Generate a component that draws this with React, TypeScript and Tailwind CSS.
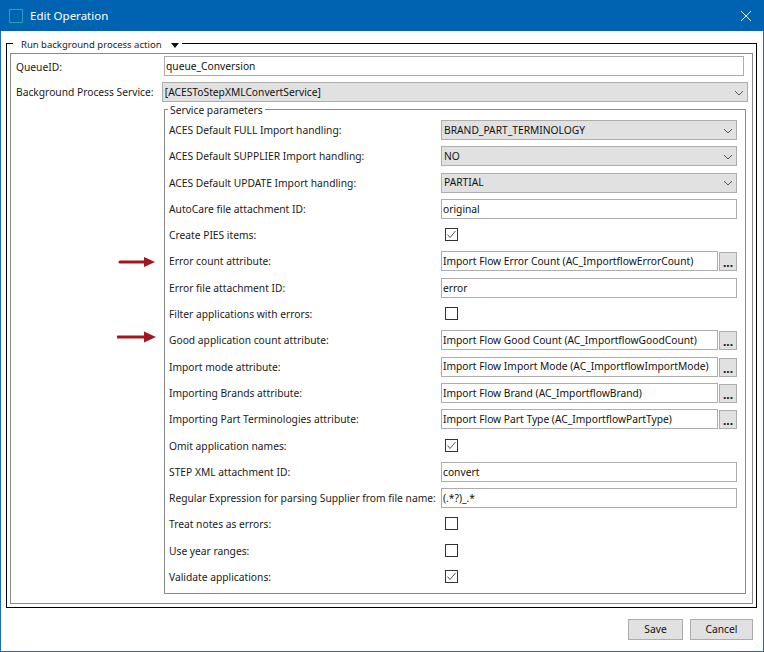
const FONT = "font-['DejaVu_Sans_Condensed','Liberation_Sans',sans-serif]"

type Row =
  | { label: string; kind: 'select' | 'text'; value: string }
  | { label: string; kind: 'attr'; value: string; arrow?: 'short' | 'long' }
  | { label: string; kind: 'check'; checked: boolean }

const rows: Row[] = [
  { label: 'ACES Default FULL Import handling:', kind: 'select', value: 'BRAND_PART_TERMINOLOGY' },
  { label: 'ACES Default SUPPLIER Import handling:', kind: 'select', value: 'NO' },
  { label: 'ACES Default UPDATE Import handling:', kind: 'select', value: 'PARTIAL' },
  { label: 'AutoCare file attachment ID:', kind: 'text', value: 'original' },
  { label: 'Create PIES items:', kind: 'check', checked: true },
  { label: 'Error count attribute:', kind: 'attr', value: 'Import Flow Error Count (AC_ImportflowErrorCount)', arrow: 'short' },
  { label: 'Error file attachment ID:', kind: 'text', value: 'error' },
  { label: 'Filter applications with errors:', kind: 'check', checked: false },
  { label: 'Good application count attribute:', kind: 'attr', value: 'Import Flow Good Count (AC_ImportflowGoodCount)', arrow: 'long' },
  { label: 'Import mode attribute:', kind: 'attr', value: 'Import Flow Import Mode (AC_ImportflowImportMode)' },
  { label: 'Importing Brands attribute:', kind: 'attr', value: 'Import Flow Brand (AC_ImportflowBrand)' },
  { label: 'Importing Part Terminologies attribute:', kind: 'attr', value: 'Import Flow Part Type (AC_ImportflowPartType)' },
  { label: 'Omit application names:', kind: 'check', checked: true },
  { label: 'STEP XML attachment ID:', kind: 'text', value: 'convert' },
  { label: 'Regular Expression for parsing Supplier from file name:', kind: 'text', value: '(.*?)_.*' },
  { label: 'Treat notes as errors:', kind: 'check', checked: false },
  { label: 'Use year ranges:', kind: 'check', checked: false },
  { label: 'Validate applications:', kind: 'check', checked: true },
]

function Arrow({ long }: { long?: boolean }) {
  return (
    <svg
      width="40"
      height="14"
      viewBox="0 0 40 14"
      className={`absolute left-[-52px] ${long ? 'top-[0px]' : 'top-[4px]'}`}
    >
      <path
        d={long ? 'M1 7H29' : 'M3 7H29'}
        stroke="#a31621"
        strokeWidth="3"
        strokeLinecap="round"
      />
      <path d={long ? 'M27 1.5L39 7L27 12.5Z' : 'M27 2L38 7L27 12Z'} fill="#a31621" />
    </svg>
  )
}

function Select({ value, className }: { value: string; className: string }) {
  return (
    <div className={`flex h-5 items-center justify-between border border-[#adadad] bg-[#e1e1e1] pl-[2px] pr-[3px] pt-[1px] ${className}`}>
      <span className="whitespace-nowrap text-[#111]">{value}</span>
      <svg width="10" height="6" viewBox="0 0 10 6" className="shrink-0">
        <path d="M1 1L5 5L9 1" fill="none" stroke="#555" strokeWidth="1" />
      </svg>
    </div>
  )
}

function Input({ value, className }: { value: string; className: string }) {
  return (
    <div className={`flex h-5 items-center whitespace-nowrap border border-[#adadad] bg-white pl-[1px] pt-[1px] text-[#111] ${className}`}>
      {value}
    </div>
  )
}

function Check({ checked }: { checked: boolean }) {
  return (
    <div className="ml-[4px] flex h-[13px] w-[13px] items-center justify-center border border-[#333] bg-white">
      {checked && (
        <svg width="11" height="11" viewBox="0 0 11 11">
          <path d="M1.5 5.5L4 8.5L9.5 2" fill="none" stroke="#555" strokeWidth="1" />
        </svg>
      )}
    </div>
  )
}

function Control({ row }: { row: Row }) {
  if (row.kind === 'select') return <Select value={row.value} className="w-[296px]" />
  if (row.kind === 'text') return <Input value={row.value} className="w-[296px]" />
  if (row.kind === 'check') return <Check checked={row.checked} />
  return (
    <div className="flex w-[296px] gap-[1px]">
      <Input value={row.value} className="w-[277px]" />
      <div className="mt-[1px] flex h-[19px] w-[18px] items-end justify-center border border-[#adadad] bg-[#e1e1e1] pb-[3px] text-[12px] leading-[8px] font-bold text-[#111]">
        ...
      </div>
    </div>
  )
}

export default function App() {
  return (
    <div className={`flex h-[652px] w-[764px] flex-col border border-t-0 border-[#1b6cb3] bg-white text-[10.25px] text-[#1a1a1a] ${FONT}`}>
      {/* Title bar */}
      <div className="mx-[-1px] flex h-[31px] shrink-0 items-center bg-[#0063b1] pl-[9px] pr-[12px] text-white">
        <div className="h-[14px] w-[14px] border border-[#18a5b5]" />
        <span className="ml-[7px] text-[11.5px]">Edit Operation</span>
        <svg width="12" height="12" viewBox="0 0 12 12" className="ml-auto">
          <path d="M1 1L11 11M11 1L1 11" stroke="white" strokeWidth="1" />
        </svg>
      </div>

      {/* Body */}
      <div className="relative ml-[5px] mr-[6px] mt-[12px] h-[565px] border border-black p-[3px] pt-[9px]">
        <div className="absolute left-[6px] top-[-6px] flex items-center gap-[9px] whitespace-nowrap bg-white pl-[8px] pr-[3px] text-[9.5px] leading-[14px] text-[#222]">
          Run background process action
          <svg width="8" height="5" viewBox="0 0 8 5" className="shrink-0">
            <path d="M0 0H8L4 5Z" fill="#111" />
          </svg>
        </div>

        <div className="h-[551px] border border-[#8a8a8a] pl-[5px] pr-[4px] pt-[2px]">
          <div className="flex h-[26px]">
            <span className="mt-[4px] w-[148px]">QueueID:</span>
            <Input value="queue_Conversion" className="w-[580px]" />
          </div>
          <div className="flex h-[27px]">
            <span className="mt-[3px] w-[146px] whitespace-nowrap">Background Process Service:</span>
            <Select value="[ACESToStepXMLConvertService]" className="w-[587px]" />
          </div>

          <div className="relative ml-[148px] h-[485px] w-[582px] border border-[#8a8a8a] pl-[4px] pt-[10px]">
            <div className="absolute left-[3px] top-[-7px] bg-white px-[2px] leading-[14px]">
              Service parameters
            </div>
            {rows.map(row => (
              <div key={row.label} className="relative flex h-[26.3px] items-start">
                {row.kind === 'attr' && row.arrow && <Arrow long={row.arrow === 'long'} />}
                <span className="mt-[3px] w-[272px] whitespace-nowrap">{row.label}</span>
                <div className={row.kind === 'check' ? 'mt-[3px]' : ''}>
                  <Control row={row} />
                </div>
              </div>
            ))}
          </div>
        </div>
      </div>

      {/* Footer */}
      <div className="mt-[11px] flex justify-end gap-[7px] pr-[10px]">
        <button className="h-[21px] w-[55px] border border-[#adadad] bg-[#e1e1e1] text-[#111]">Save</button>
        <button className="h-[21px] w-[63px] border border-[#adadad] bg-[#e1e1e1] text-[#111]">Cancel</button>
      </div>
    </div>
  )
}
